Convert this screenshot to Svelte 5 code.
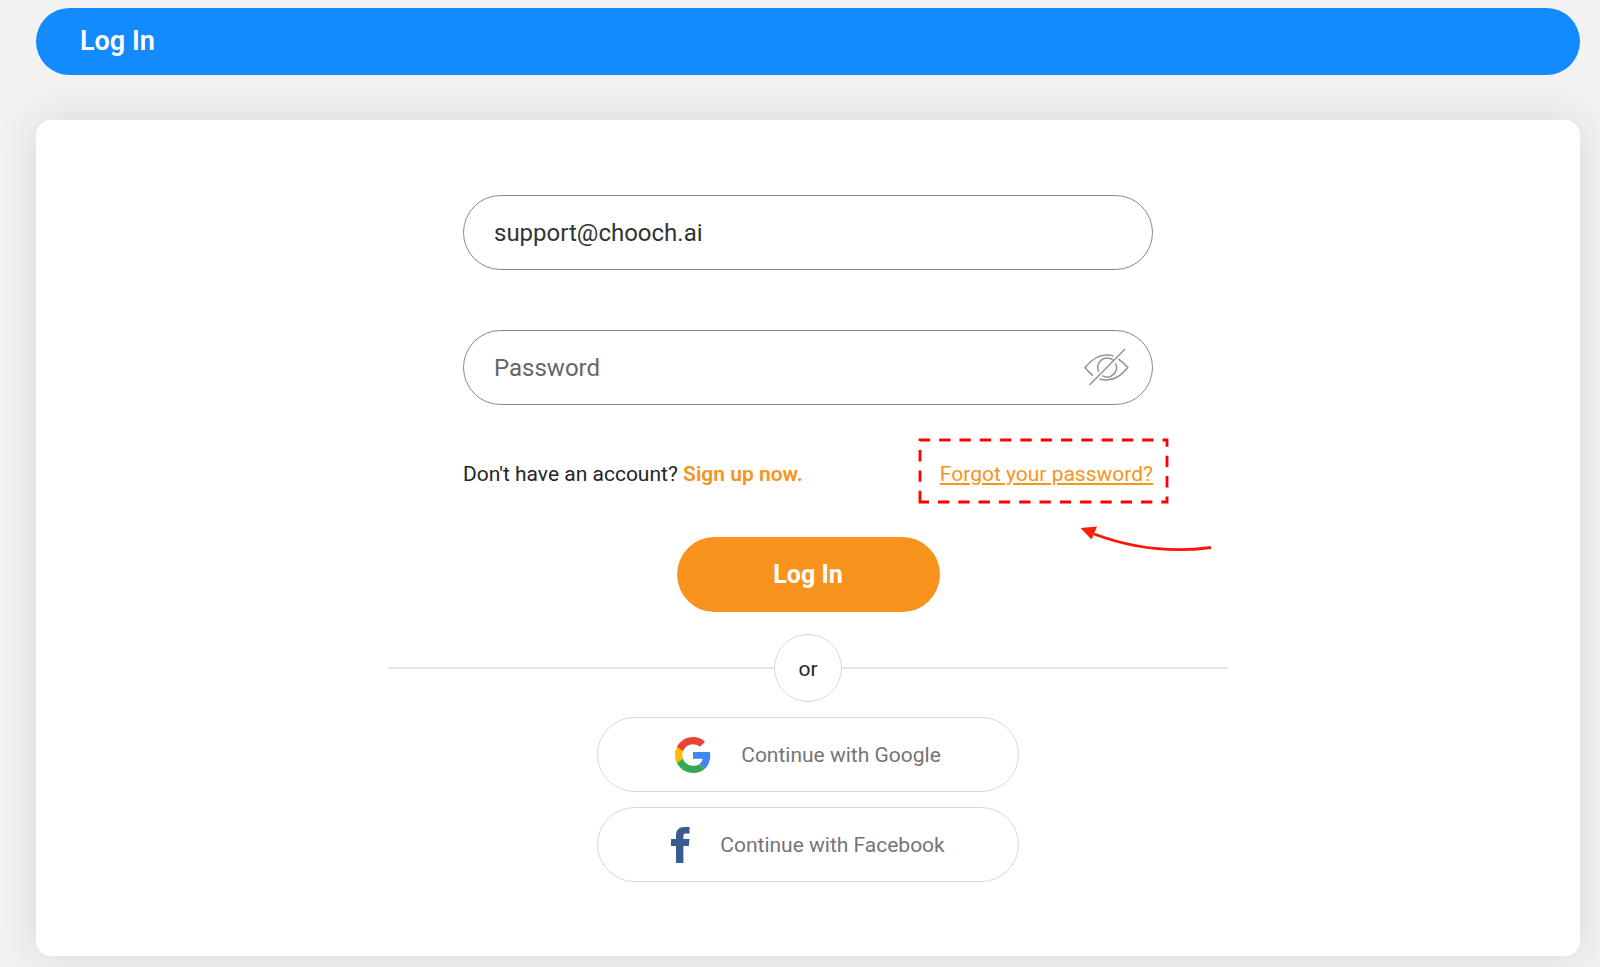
<script>
    let email = "support@chooch.ai";
    let password = "";
    let showPassword = false;

    const handleSubmit = (e) => {
        e.preventDefault();
    };
</script>

<header class="title-bar">
    <h1>Log In</h1>
</header>

<main class="card">
    <form class="login-form" on:submit={handleSubmit}>
        <input
            class="field"
            type="email"
            aria-label="Email"
            placeholder="Email"
            bind:value={email}
        />
        <div class="password-holder">
            <input
                class="field"
                type={showPassword ? "text" : "password"}
                aria-label="Password"
                placeholder="Password"
                value={password}
                on:input={(e) => (password = e.target.value)}
            />
            <button
                class="toggle"
                type="button"
                aria-label="Show password"
                on:click={() => (showPassword = !showPassword)}
            >
                <svg width="46" height="40" viewBox="0 0 46 40" fill="none" stroke="#959595" stroke-width="1.5">
                    <path d="M10 28.700C7 26.300 4.500 23.700 2 20.500C8 13 15 8 23.500 8C26 8 28.500 8.300 30.500 9" />
                    <path d="M35.200 12C39 14.300 42 17.300 44.800 20.500C39 28 32 33 23.500 33C21 33 18.500 32.700 16.500 32" />
                    <path d="M15.700 24.900A9.500 9.500 0 0 1 30.200 13.200" />
                    <path d="M32.500 16.200A9.500 9.500 0 0 1 19.300 28.700" />
                    <path d="M6.500 38L42 2" />
                </svg>
            </button>
        </div>

        <div class="links">
            <p>Don't have an account? <a class="signup" href="#signup">Sign up now.</a></p>
            <div class="forgot-holder">
                <a class="forgot" href="#forgot">Forgot your password?</a>
                <svg class="callout" width="296" height="116" viewBox="0 0 296 116" fill="none" aria-hidden="true">
                    <path d="M2 64V2H249V64Z" stroke="#ff0000" stroke-width="2.800" stroke-dasharray="11.300 9" />
                    <path d="M176 96C216 111 256 114.500 293 109.500" stroke="#ff1500" stroke-width="2.800" />
                    <path d="M162.500 90L179 88.500L173.500 101.500Z" fill="#ff1e00" />
                </svg>
            </div>
        </div>

        <button class="submit" type="submit">Log In</button>
    </form>

    <div class="divider"><span>or</span></div>

    <div class="social">
        <button type="button">
            <svg width="36" height="36" viewBox="0 0 48 48">
                <path fill="#EA4335" d="M24 9.500c3.540 0 6.710 1.220 9.210 3.600l6.850-6.850C35.900 2.380 30.470 0 24 0 14.620 0 6.510 5.380 2.560 13.220l7.980 6.190C12.430 13.720 17.740 9.500 24 9.500z" />
                <path fill="#4285F4" d="M46.980 24.550c0-1.570-.15-3.090-.38-4.550H24v9.020h12.940c-.58 2.960-2.260 5.480-4.780 7.180l7.730 6c4.510-4.180 7.090-10.360 7.090-17.650z" />
                <path fill="#FBBC05" d="M10.530 28.590c-.48-1.450-.76-2.990-.76-4.590s.27-3.140.76-4.590l-7.980-6.190C.92 16.460 0 20.120 0 24c0 3.880.92 7.540 2.560 10.780l7.970-6.190z" />
                <path fill="#34A853" d="M24 48c6.480 0 11.930-2.130 15.890-5.810l-7.730-6c-2.150 1.450-4.920 2.300-8.160 2.300-6.260 0-11.570-4.220-13.470-9.910l-7.980 6.190C6.510 42.620 14.620 48 24 48z" />
            </svg>
            Continue with Google
        </button>
        <button type="button">
            <svg width="19" height="36" viewBox="0 0 19 36">
                <path fill="#385c8e" d="M5 36V19H0V12H5V8.500C5 3 8 0 13.500 0H18.500V6.500H15C13 6.500 12.400 7.300 12.400 9V12H18.500L17.800 19H12.400V36Z" />
            </svg>
            Continue with Facebook
        </button>
    </div>
</main>

<style>
:global(body) {
    background-color: #f2f2f2;
    font-family: Roboto, "Liberation Sans", sans-serif;
    color: #252525;
}

:global(#app) {
    padding: 8px 20px 11px 36px;
}

.title-bar {
    background-color: #148aff;
    border-radius: 34px;
    padding: 0 44px;
    margin-bottom: 45px;
}

h1 {
    margin: 0;
    color: #fff;
    font-size: 27px;
    font-weight: 600;
    line-height: 67px;
}

.card {
    display: flex;
    flex-direction: column;
    align-items: center;
    background-color: #fff;
    border-radius: 15px;
    padding: 75px 24px 74px;
    box-shadow: 0 0 45px rgba(0, 0, 0, 0.11);
}

.login-form {
    display: flex;
    flex-direction: column;
    align-items: center;
    width: 100%;
    max-width: 690px;
}

.field {
    box-sizing: border-box;
    display: block;
    width: 100%;
    height: 75px;
    padding: 0 30px;
    border: 1px solid #888;
    border-radius: 38px;
    background-color: #fff;
    color: #333;
    font-family: inherit;
    font-size: 24px;
    outline: none;
}

.field::placeholder {
    color: #666;
    opacity: 1;
}

.password-holder {
    position: relative;
    width: 100%;
    margin-top: 60px;
}

.toggle {
    position: absolute;
    right: 24px;
    top: 17px;
    padding: 0;
    border: none;
    background: none;
    cursor: pointer;
}

.toggle svg {
    display: block;
}

.links {
    display: flex;
    justify-content: space-between;
    width: 100%;
    margin: 56px 0 50px;
    font-size: 21px;
    line-height: 26px;
}

.links p {
    margin: 0;
}

.signup {
    color: #f8931d;
    font-weight: 600;
    text-decoration: none;
}

.forgot-holder {
    position: relative;
}

.forgot {
    color: #f8931d;
}

.callout {
    position: absolute;
    top: -23px;
    right: -61px;
    pointer-events: none;
}

.submit {
    width: 263px;
    height: 75px;
    border: none;
    border-radius: 38px;
    background-color: #f8941d;
    color: #fff;
    font-family: inherit;
    font-size: 25px;
    font-weight: 700;
    cursor: pointer;
}

.divider {
    display: flex;
    align-items: center;
    width: 100%;
    max-width: 840px;
    margin: 22px 0 15px;
}

.divider::before,
.divider::after {
    content: "";
    flex: 1;
    height: 2px;
    background-color: #e3e3e3;
}

.divider span {
    box-sizing: border-box;
    width: 68px;
    height: 68px;
    border: 1px solid #d8d8d8;
    border-radius: 50%;
    font-size: 21px;
    line-height: 68px;
    text-align: center;
}

.social {
    display: flex;
    flex-direction: column;
    gap: 15px;
    width: 100%;
    max-width: 422px;
}

.social button {
    display: flex;
    align-items: center;
    justify-content: center;
    gap: 30px;
    height: 75px;
    border: 1px solid #d8d8d8;
    border-radius: 38px;
    background-color: #fff;
    color: #757575;
    font-family: inherit;
    font-size: 21px;
    cursor: pointer;
}
</style>
